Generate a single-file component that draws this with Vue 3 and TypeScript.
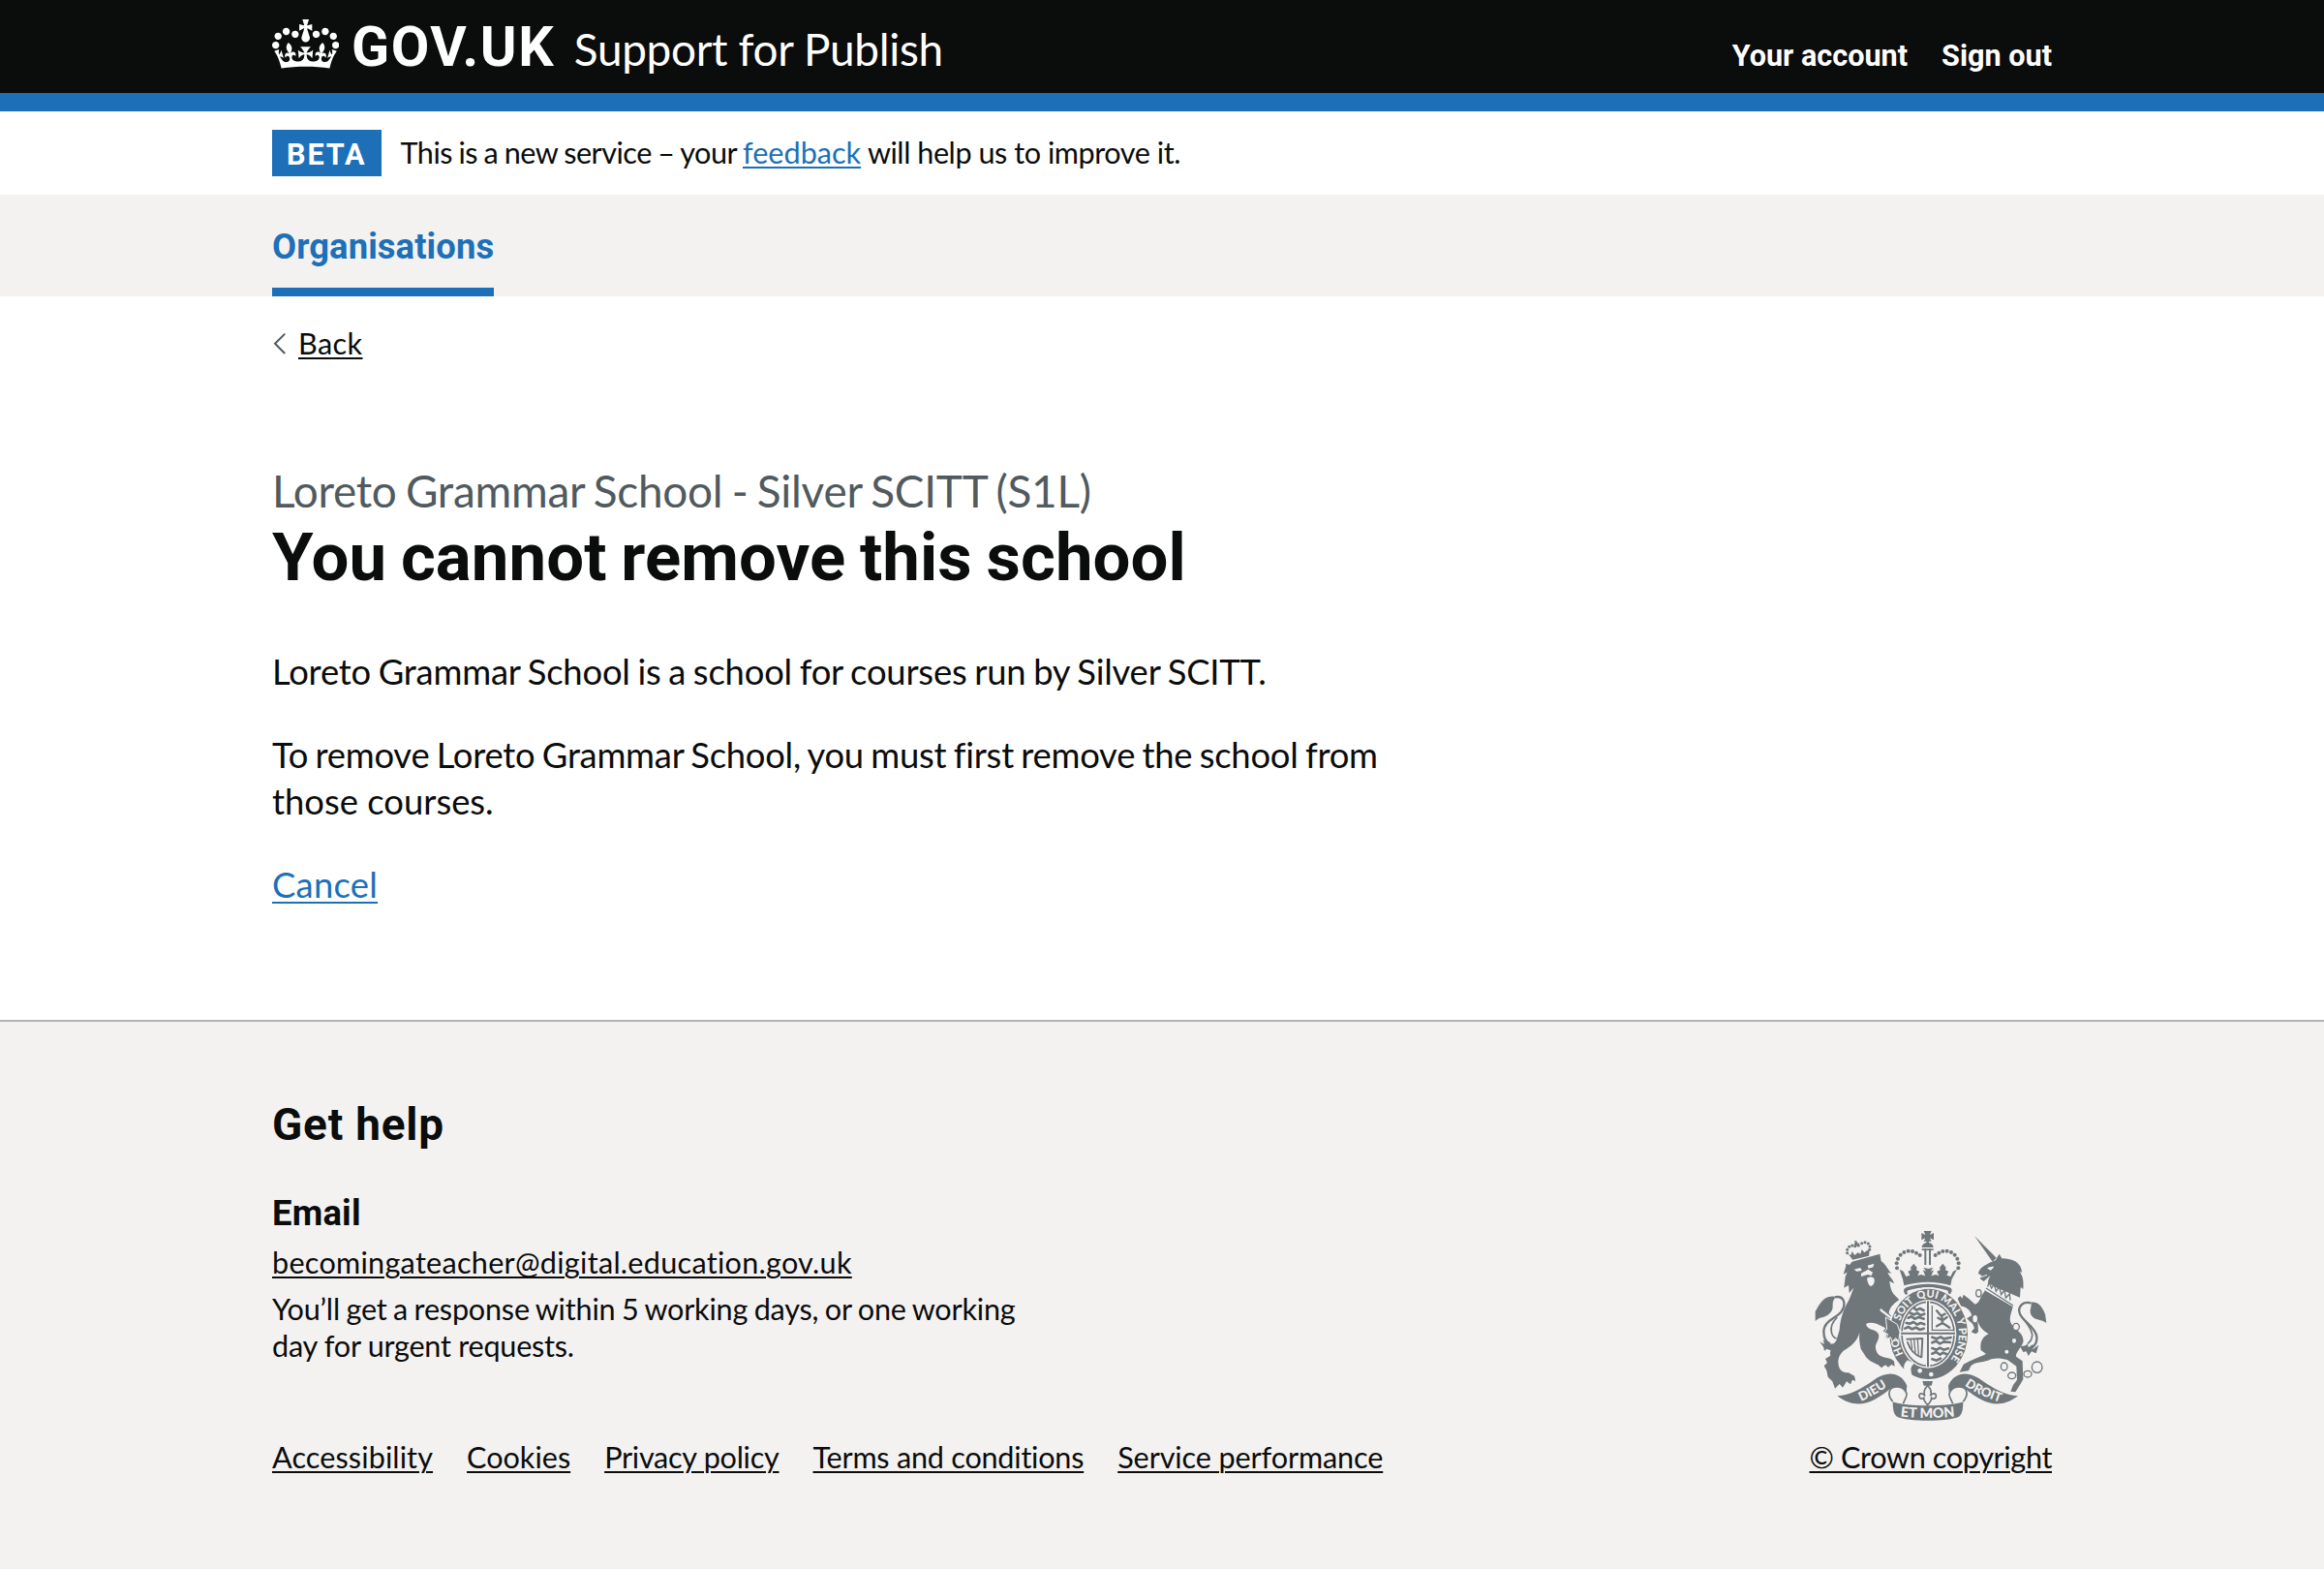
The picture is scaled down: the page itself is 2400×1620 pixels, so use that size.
<script setup lang="ts">
interface FooterLink {
  label: string
  cls: string
}

const footerLinks: FooterLink[] = [
  { label: 'Accessibility', cls: 'l1' },
  { label: 'Cookies', cls: 'l2' },
  { label: 'Privacy policy', cls: 'l3' },
  { label: 'Terms and conditions', cls: 'l4' },
  { label: 'Service performance', cls: 'l5' },
]

// Pearls on the left arch of the royal crown; the right arch is mirrored.
const pearls: [number, number][] = [
  [297, 148], [296, 133], [300, 119], [308, 107], [319, 99], [332, 95], [345, 96], [357, 101], [368, 108],
]

// Pearls of the lion's crown.
const lionPearls: [number, number][] = [
  [143, 101], [143, 91], [149, 82], [158, 78], [167, 80], [178, 78], [188, 71], [198, 68], [208, 72], [213, 81], [212, 91],
]

// Links of the unicorn's chain: x, y, radius x, radius y.
const chain: [number, number, number, number][] = [
  [550, 226, 8, 11], [539, 305, 9, 13], [666, 330, 10, 11], [660, 373, 8, 9], [637, 407, 8, 8],
  [629, 453, 10, 12], [653, 481, 12, 10], [702, 476, 12, 10], [731, 455, 16, 17],
]
</script>

<template>
  <div class="page">
    <header class="header">
      <div class="container header-row">
        <svg class="crown" viewBox="0 0 132 97" aria-hidden="true">
          <path
            fill="#fff"
            fill-rule="evenodd"
            d="M25 30.2c3.5 1.5 7.7-.2 9.1-3.7 1.5-3.6-.2-7.8-3.9-9.2-3.6-1.4-7.6.3-9.1 3.9-1.4 3.5.3 7.5 3.9 9zM9 39.5c3.6 1.5 7.8-.2 9.2-3.7 1.5-3.6-.2-7.8-3.9-9.1-3.6-1.5-7.6.2-9.1 3.8-1.4 3.5.3 7.5 3.8 9zM4.4 57.2c3.5 1.5 7.7-.2 9.1-3.8 1.5-3.6-.2-7.7-3.9-9.1-3.5-1.5-7.6.3-9.1 3.8-1.4 3.5.3 7.6 3.9 9.1zm38.3-21.4c3.5 1.5 7.7-.2 9.1-3.8 1.5-3.6-.2-7.7-3.9-9.1-3.6-1.5-7.6.3-9.1 3.8-1.3 3.6.4 7.7 3.9 9.1zm64.4-5.6c-3.6 1.5-7.8-.2-9.1-3.7-1.5-3.6.2-7.8 3.8-9.2 3.6-1.4 7.7.3 9.2 3.9 1.3 3.5-.4 7.5-3.9 9zm15.9 9.3c-3.6 1.5-7.7-.2-9.1-3.7-1.5-3.6.2-7.8 3.7-9.1 3.6-1.5 7.7.2 9.2 3.8 1.5 3.5-.3 7.5-3.8 9zm4.7 17.7c-3.6 1.5-7.8-.2-9.2-3.8-1.5-3.6.2-7.7 3.9-9.1 3.6-1.5 7.7.3 9.2 3.8 1.3 3.5-.4 7.6-3.9 9.1zM89.3 35.8c-3.6 1.5-7.8-.2-9.2-3.8-1.4-3.6.2-7.7 3.9-9.1 3.6-1.5 7.7.3 9.2 3.8 1.4 3.6-.3 7.7-3.9 9.1zM69.7 17.7l8.9 4.7V9.3l-8.9 2.8c-.2-.3-.5-.6-.9-.9L72.4 0H59.6l3.5 11.2c-.3.3-.6.5-.9.9l-8.8-2.8v13.1l8.8-4.7c.3.3.6.7.9.9l-5 15.4v.1c-.2.8-.4 1.6-.4 2.4 0 4.1 3.1 7.5 7 8.1h.2c.3 0 .7.1 1 .1.4 0 .7 0 1-.1h.2c4-.6 7.1-4.1 7.1-8.1 0-.8-.1-1.7-.4-2.4V34l-5.1-15.4c.4-.2.7-.6 1-.9zM66 92.8c16.9 0 32.8 1.1 47.1 3.2 4-16.9 8.9-26.7 14-33.5l-9.6-3.4c1 4.9 1.1 7.2 0 10.2-1.5-1.4-3-4.3-4.2-8.7L108.6 76c2.8-2 5-3.2 7.5-3.3-4.4 9.4-10 11.9-13.6 11.2-4.3-.8-6.3-4.6-5.6-7.9 1-4.7 5.7-5.9 8-.5 4.3-8.7-3-11.4-7.6-8.8 7.1-7.2 7.9-13.5 2.1-21.1-8 6.1-8.1 12.3-4.5 20.8-4.7-5.4-12.1-2.5-9.5 6.2 3.4-5.2 7.9-2 7.2 3.1-.6 4.3-6.4 7.8-13.5 7.2-10.3-.9-10.9-8-11.2-13.8 2.5-.5 7.1 1.8 11 7.3L80.2 60c-4.1 4.4-8 5.3-12.3 5.4 1.4-4.4 8-11.6 8-11.6H55.5s6.4 7.2 7.9 11.6c-4.2-.1-8-1-12.3-5.4l1.4 16.4c3.9-5.5 8.5-7.7 10.9-7.3-.3 5.8-.9 12.8-11.1 13.8-7.2.6-12.9-2.9-13.5-7.2-.7-5 3.8-8.3 7.1-3.1 2.7-8.7-4.6-11.6-9.4-6.2 3.7-8.5 3.6-14.7-4.6-20.8-5.8 7.6-5 13.9 2.2 21.1-4.7-2.6-11.9.1-7.7 8.8 2.3-5.5 7.1-4.2 8.1.5.7 3.3-1.3 7.1-5.7 7.9-3.5.7-9-1.8-13.5-11.2 2.5.1 4.7 1.3 7.5 3.3l-4.7-15.4c-1.2 4.4-2.7 7.2-4.3 8.7-1.1-3-.9-5.3 0-10.2l-9.5 3.4c5 6.9 9.9 16.7 14 33.5 14.8-2.1 30.8-3.2 47.7-3.2z"
          />
        </svg>
        <span class="logotype">GOV.UK</span>
        <span class="service">Support for Publish</span>
        <nav class="account">
          <a class="a1">Your account</a>
          <a class="a2">Sign out</a>
        </nav>
      </div>
    </header>

    <div class="container phase">
      <strong class="tag">BETA</strong>
      <span class="phase-text"><span class="p1">This is a new service – your </span><a class="link p2">feedback</a><span class="p3"> will help us to improve it.</span></span>
    </div>

    <nav class="primary">
      <div class="container primary-row">
        <a class="primary-item">Organisations</a>
      </div>
    </nav>

    <main class="container main">
      <a class="back">
        <svg class="chevron" viewBox="0 0 14 24" aria-hidden="true">
          <path d="M12.2 1.6 2 11.8 12.2 22" fill="none" stroke="#505a5f" stroke-width="2" />
        </svg>
        <span class="back-text">Back</span>
      </a>
      <span class="caption">Loreto Grammar School - Silver SCITT (S1L)</span>
      <h1 class="title">You cannot remove this school</h1>
      <p class="body b1">Loreto Grammar School is a school for courses run by Silver SCITT.</p>
      <p class="body b2">To remove Loreto Grammar School, you must first remove the school from<br /><span class="b3">those courses.</span></p>
      <p class="body"><a class="link cancel">Cancel</a></p>
    </main>

    <footer class="footer">
      <div class="container">
        <h2 class="help">Get help</h2>
        <div class="foot-row">
          <div class="foot-left">
            <h3 class="email">Email</h3>
            <a class="mail">becomingateacher@digital.education.gov.uk</a>
            <p class="response"><span class="r1">You’ll get a response within 5 working days, or one working</span><br /><span class="r2">day for urgent requests.</span></p>
            <div class="foot-links">
              <a v-for="l in footerLinks" :key="l.label" :class="l.cls">{{ l.label }}</a>
            </div>
          </div>
          <div class="foot-right">
            <svg class="crest" viewBox="42 33 720 588" aria-hidden="true">
              <g fill="#6f777b">
                <!-- Royal crown -->
                <path d="M380 33h24l-5 12 12-6v22l-12-6 5 10h-24l5-10-12 6V39l12 6z" />
                <path d="M388 64h8v8h-8zM374 84c1-20 35-20 36 0z" />
                <path d="M382 88h6v50h-6zM396 88h6v50h-6z" />
                <path d="M374 88h36v5h-36z" />
                <g v-for="(p, i) in pearls" :key="i">
                  <circle :cx="p[0]" :cy="p[1]" r="6" />
                  <circle :cx="784 - p[0]" :cy="p[1]" r="6" />
                </g>
                <path d="M305 152l12 6 8 16 12-4-6-12 10-4-2-8 10-12 10 12-2 8 10 4-6 14 10-4 14 4-8-18 10 4-8-12 15 4 15-4-8 12 10-4-8 18 14-4 10 4-6-14 10-4-2-8 10-12 10 12-2 8 10 4-6 12 12 4 8-16 12-6-16 30-4 20q-68-22-144 0l-4-20z" />
                <path d="M326 208c40-14 94-14 134 0 12 4 6 18 0 22h-8c4-6 6-10 0-13-40-12-80-12-120 0-6 3-4 7 0 13h-8c-6-4-10-18 2-22z" />

                <!-- Lion's crown -->
                <circle v-for="(p, i) in lionPearls" :key="'l' + i" :cx="p[0]" :cy="p[1]" r="4.5" />
                <path d="M165 62l8 3 3 7 5-2-2 8-6 2-10-5 4-5z" />
                <path d="M146 104l8 4 4-12 8 12 10-8 8 4 4-14 8 10 10-8 6 4-2 14-50 12z" />

                <!-- Lion -->
                <path
                  d="M138 134l12 4 8-10 86-24 4 22c16 12 18 24 32 38l-12-2c6 14 16 18 20 34l-14-8c2 16 4 30 16 44l14 14c-20 14-30 24-32 42l26 30 4 52-12-10-10 12-6-14-12 6 4-16-12-4 8-10-28-14c-14-4-24-4-32 0-2 8 8 16 22 20 20 8 20 20 12 36-10 16-4 28 2 38 14 14 34 8 50 22l2 16-10-5-10 8-9-7-12 9-10-9c-14-6-34-16-40-28l-14-22c-4-18-6-32-4-50-8 28-26 42-50 56-16 16-18 30-14 48 4 14 14 20 30 20l18 10 4 16-10-4-6 14-12-9-12 19-10-11-14 14-8-22-14-14-4-20-8-14 10-10-6-12 16-10c-4-12 4-30 18-46l10-34c2-34 12-64 30-94l14-36-14 16-2-24-14 8 4-34 6-14-12 6 8-26z"
                />
                <path d="M104 236c-34-6-48 26-60 46v30c14-16 34-8 48-28 12-14 0-28 12-42z" />
                <path d="M58 376l14 8-4-14 14 8c10 8 24 4 34-2l2 14c-10 10-16 12-30 12l-8-4-8 6-2-10z" />

                <!-- Unicorn -->
                <path d="M537 48l68 68-12 12z" />
                <path
                  d="M602 124l12-20 8 14c34 0 62 14 62 44l-8-3c12 12 14 32 12 54l-8-6-2 32-96-40c-6-10 0-18 4-28l-20 18-12-8 6-10-11-6c3-20 22-26 35-34z"
                />
                <path
                  d="M568 216l88 52c-6 26-14 36-4 54 18 20 40 32 36 56-10 22-24 32-22 44l20 14 2 56-8 14-16 26-15-2 8-20 12-16-2-42-28-20c-20-6-36-6-50-2-20 12-50 6-64 22l-6 14-28 4 12-24c28-16 56-24 70-32l-16-12c-4-22 4-42 24-50-20-12-32-26-34-46l2 40-8 6-14-6 10-12-6-14-18-16 16-10c-8-20-20-28-34-28l-10-24 8-8 6 8 4-12 16 12 20 18c16-4 14-24 30-40z"
                />
                <path d="M712 254c24-4 36 16 44 36l4 28c-20-14-38-6-48-26-6-16 4-24 0-38z" />
                <path d="M676 386c12 6 20 4 26-4l2 12 14-10 0 16 18-14-8 26-14-6-10 14-6-14-10 2z" />
              </g>

              <g fill="none" stroke="#6f777b">
                <path d="M104 238c32-6 36 24 20 46-20 22-52 26-54 60 0 20 8 34 20 38" stroke-width="7" />
                <path d="M112 300c-16 16-22 28-18 46 2 10 8 18 16 20" stroke-width="5" />
                <path d="M712 256c-28-6-42 14-34 34 12 26 48 40 52 70 2 14-4 26-14 34" stroke-width="7" />
                <path d="M694 312c12 16 20 26 22 42 0 14-6 22-14 28" stroke-width="5" />
              </g>

              <!-- Lion's face -->
              <g fill="#f3f2f1">
                <path d="M164 152l20-5 4 9-16 2zM206 140l20-6-3 11-14 4z" />
                <path d="M186 164l22-12 14 9-4 10-12-3-20 6z" />
                <path d="M204 180c6-6 18-6 22 0 4 12-2 22-10 24-8-3-10-14-12-24z" />
                <path d="M246 272l60 48-4 5-58-45z" />
              </g>
              <path d="M578 148l18-4-8 10zM558 176l18-7" fill="#f3f2f1" stroke="#f3f2f1" stroke-width="3" />

              <!-- Unicorn's collar -->
              <path d="M574 202l84 54" stroke="#f3f2f1" stroke-width="20" />
              <path d="M573 210l84 54" stroke="#6f777b" stroke-width="4" />
              <path d="M578 206l4-14 8 18 8-12 6 22 10-14 6 24 10-14 4 24 12-12 2 20" fill="none" stroke="#6f777b" stroke-width="4" />

              <!-- Chain -->
              <g fill="#f3f2f1" stroke="#6f777b" stroke-width="4">
                <ellipse v-for="(c, i) in chain" :key="'c' + i" :cx="c[0]" :cy="c[1]" :rx="c[2]" :ry="c[3]" />
              </g>

              <!-- Garter -->
              <ellipse cx="395" cy="352" rx="126" ry="145" fill="#f3f2f1" />
              <ellipse cx="395" cy="352" rx="121" ry="140" fill="#6f777b" />
              <ellipse cx="393" cy="352" rx="88" ry="106" fill="#f3f2f1" />
              <ellipse cx="393" cy="352" rx="81" ry="99" fill="#f3f2f1" stroke="#6f777b" stroke-width="5" />
              <g fill="none" stroke="#6f777b" stroke-width="8" stroke-linecap="round" stroke-linejoin="round">
                <path d="M350 272l8 6 10-5 12 6M338 287l12 5 10-5 10 7 12-4M332 302l10-4 10 7 12-5 16 5M326 318l12 2 10-5 12 8 10-5 12 4M322 335l10-5 12 7 12-5 12 7 12-4" />
                <path d="M406 362l14 5 12-6 10 6 22-4M406 379l12-5 12 8 12-6 20 2M406 396l14 5 10-6 12 6 14-4M406 413l12-5 12 8 10-6 10 4M406 430l14 4 12-6" />
                <path d="M420 280l14 16 12-6M424 302l14 8 14-10M420 328l18-10 22 14M436 296l2 24" stroke-width="7" />
                <path d="M328 368l48-2-3 58M330 378c8 24 22 38 42 46" stroke-width="6" />
                <path d="M340 372l4 24M350 370l4 38M361 370l3 44" stroke-width="4" />
              </g>
              <path d="M406 264v76h66" fill="none" stroke="#6f777b" stroke-width="4" />
              <path d="M393 250v204M309 350h168" stroke="#f3f2f1" stroke-width="13" />
              <path d="M393 250v204M309 350h168" stroke="#6f777b" stroke-width="6" />
              <path d="M304 446l-22-18M330 436c-10 10-12 22-4 34l14 6c-4-14-2-26 6-32z" fill="#f3f2f1" stroke="#f3f2f1" stroke-width="5" />
              <circle cx="368" cy="466" r="7" fill="#f3f2f1" />
              <circle cx="403" cy="477" r="7" fill="#f3f2f1" />

              <defs>
                <path id="garter-path" d="M395 465A94 113 0 0 1 395 239A94 113 0 0 1 395 465" />
                <path id="dieu-path" d="M166 569C208 552 240 534 284 502" />
                <path id="droit-path" d="M492 500C536 536 574 550 634 569" />
                <path id="mon-path" d="M290 605Q392 619 494 605" />
              </defs>
              <g class="motto garter-text">
                <text><textPath href="#garter-path" startOffset="19%">HO</textPath></text>
                <text><textPath href="#garter-path" startOffset="37%">SOIT</textPath></text>
                <text><textPath href="#garter-path" startOffset="49.5%">QUI</textPath></text>
                <text><textPath href="#garter-path" startOffset="61%">MAL</textPath></text>
                <text><textPath href="#garter-path" startOffset="69.5%">Y</textPath></text>
                <text><textPath href="#garter-path" startOffset="80%">PENSE</textPath></text>
              </g>

              <!-- Lion's paw over the garter -->
              <path
                d="M262 300l36 22 8 24-4 30-9-12-10 12-6-14-14 6 6-16-12-4 9-11z"
                fill="#6f777b"
                stroke="#f3f2f1"
                stroke-width="3"
              />

              <!-- Scroll -->
              <g fill="#6f777b">
                <path d="M112 544c40-2 74-22 112-48 40-30 84-28 104 16l-2 20c-16-18-36-20-50-10-46 36-98 72-164 22z" />
                <path d="M672 544c-40-2-74-22-112-48-40-30-84-28-104 16l2 20c16-18 36-20 50-10 46 36 98 72 164 22z" />
                <path d="M284 562c40 16 176 16 218 0 0 26-4 40-13 46-36 16-156 16-192 0-9-6-13-20-13-46z" />
                <path d="M376 498h32l-4 14h-24z" />
              </g>
              <g fill="#f3f2f1" stroke="#6f777b" stroke-width="5">
                <path d="M284 562c-18-22-14-44 10-46 22-2 40 18 30 34l-8 18" />
                <path d="M502 562c18-22 14-44-10-46-22-2-40 18-30 34l8 18" />
                <path d="M392 512c10 10 14 20 8 32 8-12 20-8 18 2-2 8-10 8-14 4 0 8-4 14-12 22-8-8-12-14-12-22-4 4-12 4-14-4-2-10 10-14 18-2-6-12-2-22 8-32z" />
              </g>
              <g class="motto">
                <text><textPath href="#dieu-path" startOffset="50%">DIEU</textPath></text>
                <text><textPath href="#droit-path" startOffset="50%">DROIT</textPath></text>
                <text class="m-mon"><textPath href="#mon-path" startOffset="50%">ET MON</textPath></text>
              </g>
            </svg>
            <a class="copyright">© Crown copyright</a>
          </div>
        </div>
      </div>
    </footer>
  </div>
</template>

<style>
body {
  background: #fff;
}
</style>

<style scoped>
.page {
  display: flex;
  flex-direction: column;
  min-height: 1620px;
  font-family: Lato, 'Liberation Sans', sans-serif;
  font-size: 30.6px;
  line-height: 38.3px;
  color: #0b0c0c;
  white-space: nowrap;
  font-variant-ligatures: none;
}
h1, h2, h3, p {
  margin: 0;
}
.container {
  box-sizing: border-box;
  width: 1838px;
  margin: 0 auto;
}

/* Header */
.header {
  box-sizing: border-box;
  height: 115px;
  background: #0b0c0c;
  border-bottom: 19px solid #1d70b8;
}
.header-row {
  display: flex;
  align-items: baseline;
  padding-top: 19.7px;
  color: #fff;
}
.crown {
  display: block;
  flex: none;
  align-self: flex-start;
  width: 69.4px;
  height: 51px;
  margin-top: 0.6px;
}
.logotype {
  margin-left: 12.5px;
  font: 700 57.4px/57.4px Roboto, sans-serif;
  letter-spacing: 1.7px;
}
.service {
  margin-left: 19.3px;
  font-size: 45.9px;
  line-height: 57.4px;
  letter-spacing: -0.33px;
}
.account {
  display: flex;
  gap: 35px;
  margin-left: auto;
  font: 700 30.6px/38.3px Roboto, sans-serif;
}

/* Phase banner */
.phase {
  display: flex;
  align-items: flex-start;
  height: 86px;
  padding-top: 19px;
}
.tag {
  box-sizing: border-box;
  width: 113px;
  height: 48px;
  padding: 1.5px 0 0 15px;
  background: #1d70b8;
  color: #fff;
  font: 700 30.6px/48px Roboto, sans-serif;
  letter-spacing: 1.9px;
}
.phase-text {
  margin: 5px 0 0 19.5px;
  white-space: pre;
}
.p1 {
  letter-spacing: -0.5px;
  word-spacing: -0.85px;
}
.p3 {
  letter-spacing: -0.45px;
}
.link {
  color: #1d70b8;
  text-decoration: underline 2px;
  text-underline-offset: 3px;
}

/* Primary navigation */
.primary {
  height: 105px;
  background: #f3f2f1;
}
.primary-row {
  display: flex;
}
.primary-item {
  box-sizing: border-box;
  height: 105px;
  padding-top: 29.8px;
  border-bottom: 9px solid #1d70b8;
  color: #1d70b8;
  font: 700 36.4px/47.9px Roboto, sans-serif;
  letter-spacing: 0.08px;
}

/* Main */
.main {
  display: flex;
  flex-direction: column;
  height: 747px;
  padding-top: 29.5px;
}
.back {
  display: flex;
  align-items: center;
}
.chevron {
  width: 14px;
  height: 24px;
  margin: 0 12px 0 1px;
}
.back-text {
  text-decoration: underline 2px;
  text-underline-offset: 3px;
  letter-spacing: 0.4px;
}
.caption {
  margin-top: 104px;
  font-size: 45.9px;
  line-height: 57.4px;
  color: #505a5f;
  letter-spacing: -0.25px;
  word-spacing: -2.2px;
}
.title {
  margin: 2.5px 0 55.8px;
  font: 700 68.9px/76.6px Roboto, sans-serif;
  letter-spacing: 0.08px;
  word-spacing: -2.5px;
}
.body {
  margin-bottom: 38.2px;
  font-size: 36.4px;
  line-height: 47.9px;
}
.b1 {
  letter-spacing: -0.2px;
  word-spacing: -1.4px;
}
.b2 {
  letter-spacing: -0.25px;
  word-spacing: -1.65px;
}
.b3 {
  letter-spacing: 0;
  word-spacing: 0;
}
.cancel {
  text-underline-offset: 4px;
  letter-spacing: 0.25px;
}

/* Footer */
.footer {
  flex: 1;
  padding-top: 77.5px;
  background: #f3f2f1;
  border-top: 2px solid #b1b4b6;
}
.help {
  font: 700 45.9px/57.4px Roboto, sans-serif;
  letter-spacing: 0.8px;
}
.foot-row {
  display: flex;
  justify-content: space-between;
  align-items: flex-end;
}
.foot-left {
  display: flex;
  flex-direction: column;
  align-items: flex-start;
}
.email {
  margin-top: 39px;
  font: 700 36.4px/47.9px Roboto, sans-serif;
  letter-spacing: 0.2px;
}
.mail {
  margin-top: 8.5px;
  letter-spacing: 0.27px;
}
.response {
  margin: 9.3px 0 76.8px;
}
.r1 {
  letter-spacing: -0.2px;
  word-spacing: -1.1px;
}
.r2 {
  letter-spacing: -0.25px;
}
.mail,
.foot-links a,
.copyright {
  text-decoration: underline 2px;
  text-underline-offset: 3px;
}
.foot-links {
  display: flex;
  gap: 35px;
}
.l1 {
  letter-spacing: 0.1px;
}
.l3 {
  letter-spacing: -0.27px;
}
.l4 {
  letter-spacing: -0.23px;
}
.l5 {
  letter-spacing: -0.12px;
}
.copyright {
  letter-spacing: -0.36px;
}
.foot-right {
  display: flex;
  flex-direction: column;
  align-items: center;
}
.crest {
  display: block;
  width: 240px;
  height: 196px;
  margin-bottom: 19.5px;
}
.motto {
  fill: #f3f2f1;
  font: 900 39px Lato, sans-serif;
  text-anchor: middle;
}
.garter-text {
  font-size: 33px;
}
.m-mon {
  font-size: 43px;
}
</style>
